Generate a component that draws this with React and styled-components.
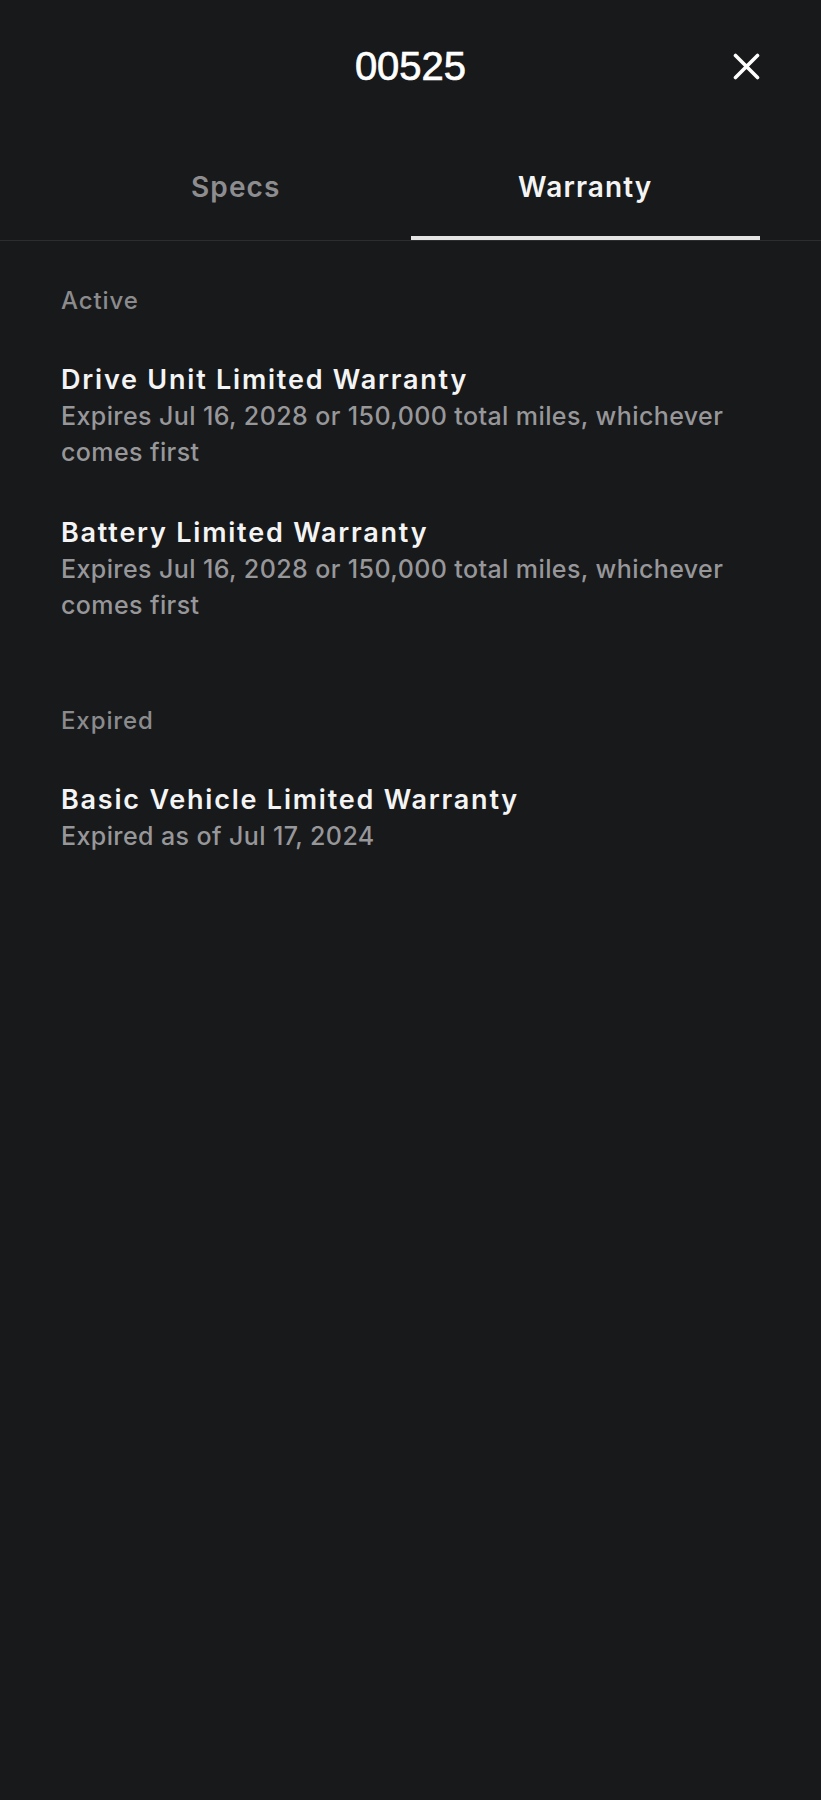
import React, { useState } from "react";
import styled, { createGlobalStyle } from "styled-components";

const GlobalStyle = createGlobalStyle`
  html, body {
    margin: 0;
    padding: 0;
    background: #18191b;
  }
  body {
    font-family: Inter, "Noto Sans", "Liberation Sans", sans-serif;
    -webkit-font-smoothing: antialiased;
  }
  * {
    box-sizing: border-box;
  }
`;

const warranties = [
  {
    status: "Active",
    items: [
      {
        title: "Drive Unit Limited Warranty",
        detail:
          "Expires Jul 16, 2028 or 150,000 total miles, whichever comes first",
      },
      {
        title: "Battery Limited Warranty",
        detail:
          "Expires Jul 16, 2028 or 150,000 total miles, whichever comes first",
      },
    ],
  },
  {
    status: "Expired",
    items: [
      {
        title: "Basic Vehicle Limited Warranty",
        detail: "Expired as of Jul 17, 2024",
      },
    ],
  },
];

const App = () => {
  const [tab, setTab] = useState("Warranty");

  return (
    <>
      <GlobalStyle />
      <Page>
        <Header>
          <span />
          <Title>00525</Title>
          <CloseButton aria-label="Close">
            <svg width="27" height="27" viewBox="0 0 27 27" fill="none">
              <path
                d="M2.5 2.5L24.5 24.5M24.5 2.5L2.5 24.5"
                stroke="#ffffff"
                strokeWidth="3.6"
                strokeLinecap="round"
              />
            </svg>
          </CloseButton>
        </Header>

        <Tabs>
          {["Specs", "Warranty"].map((t) => (
            <Tab key={t} active={tab === t} onClick={() => setTab(t)}>
              {t}
            </Tab>
          ))}
        </Tabs>

        <Content>
          {warranties.map((group) => (
            <Section key={group.status}>
              <SectionLabel>{group.status}</SectionLabel>
              {group.items.map((item) => (
                <Item key={item.title}>
                  <ItemTitle>{item.title}</ItemTitle>
                  <ItemDetail>{item.detail}</ItemDetail>
                </Item>
              ))}
            </Section>
          ))}
        </Content>
      </Page>
    </>
  );
};

export default App;

export const Page = styled.div`
  min-height: 1800px;
  background: #18191b;
  color: #f4f4f4;
`;

export const Header = styled.header`
  display: grid;
  grid-template-columns: 1fr auto 1fr;
  align-items: center;
  padding: 46px 61px 83px;
`;

export const Title = styled.h1`
  margin: 0;
  font-family: "Liberation Sans", Arial, sans-serif;
  font-size: 40px;
  line-height: 40px;
  font-weight: 400;
  color: #ffffff;
  -webkit-text-stroke: 0.7px #ffffff;
`;

export const CloseButton = styled.button`
  justify-self: end;
  display: flex;
  align-items: center;
  justify-content: center;
  width: 27px;
  height: 27px;
  padding: 0;
  border: none;
  background: transparent;
  cursor: pointer;
`;

export const Tabs = styled.nav`
  display: grid;
  grid-template-columns: 1fr 1fr;
  padding: 0 61px;
  border-bottom: 1px solid #2c2d30;
`;

export const Tab = styled.button`
  padding: 0 0 31px;
  border: none;
  border-bottom: 4px solid ${(p) => (p.active ? "#e4e4e4" : "transparent")};
  background: transparent;
  font-family: inherit;
  font-size: 28px;
  line-height: 36px;
  font-weight: 600;
  letter-spacing: 1.1px;
  color: ${(p) => (p.active ? "#f4f4f4" : "#8d8d8f")};
  cursor: pointer;
`;

export const Content = styled.main`
  display: flex;
  flex-direction: column;
  gap: 82px;
  padding: 44px 61px 0;
`;

export const Section = styled.section`
  display: flex;
  flex-direction: column;
  gap: 45px;
`;

export const SectionLabel = styled.div`
  font-size: 24px;
  line-height: 32px;
  font-weight: 500;
  letter-spacing: 0.9px;
  color: #8b8b8d;
`;

export const Item = styled.div`
  display: flex;
  flex-direction: column;
`;

export const ItemTitle = styled.div`
  font-size: 27px;
  line-height: 36px;
  font-weight: 600;
  letter-spacing: 1.78px;
  color: #f4f4f4;
`;

export const ItemDetail = styled.div`
  font-size: 25px;
  line-height: 36px;
  font-weight: 500;
  letter-spacing: 0.4px;
  color: #97979a;
`;
